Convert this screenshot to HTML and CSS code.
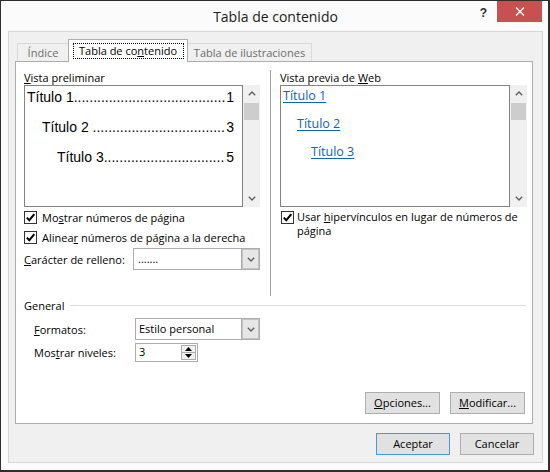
FILE: index.html
```html
<!DOCTYPE html>
<html lang="es">
<head>
<meta charset="utf-8">
<title>Tabla de contenido</title>
<link rel="stylesheet" href="styles.css">
</head>
<body>
<div class="window">
  <div class="titlebar">
    <div></div>
    <div class="title">Tabla de contenido</div>
    <div class="title-actions">
      <span class="help">?</span>
      <span class="close"><svg width="10" height="9" viewBox="0 0 10 9"><path d="M1 0.5 L9 8.5 M9 0.5 L1 8.5" stroke="#fff" stroke-width="1.4" fill="none"/></svg></span>
    </div>
  </div>
  <div class="client">
    <div class="tabs">
      <div class="tab tab-first">Índice</div>
      <div class="tab active"><span class="focus">Tabla de co<u>n</u>tenido</span></div>
      <div class="tab tab-last">Tabla de ilustraciones</div>
    </div>
    <div class="panel">
      <div class="columns">
        <div class="col col-left">
          <div class="label"><u>V</u>ista preliminar</div>
          <div class="preview">
            <div class="box print">
              <div class="toc-row lvl1"><span>Título 1.......................................</span><span class="num">1</span></div>
              <div class="toc-row lvl2"><span>Título 2 ..................................</span><span class="num">3</span></div>
              <div class="toc-row lvl3"><span>Título 3...............................</span><span class="num">5</span></div>
            </div>
            <div class="scroll">
              <div class="arrow"><svg width="8" height="5" viewBox="0 0 8 5"><path d="M0.8 4.2 L4 1 L7.2 4.2" stroke="#606060" stroke-width="1.4" fill="none"/></svg></div>
              <div class="thumb"></div>
              <div class="track"></div>
              <div class="arrow"><svg width="8" height="5" viewBox="0 0 8 5"><path d="M0.8 0.8 L4 4 L7.2 0.8" stroke="#606060" stroke-width="1.4" fill="none"/></svg></div>
            </div>
          </div>
          <div class="check">
            <span class="cbox"><svg width="11" height="11" viewBox="0 0 11 11"><path d="M1.8 5.6 L4.3 8.2 L9.3 2.2" stroke="#000" stroke-width="2" fill="none"/></svg></span>
            <span>Mo<u>s</u>trar números de página</span>
          </div>
          <div class="check">
            <span class="cbox"><svg width="11" height="11" viewBox="0 0 11 11"><path d="M1.8 5.6 L4.3 8.2 L9.3 2.2" stroke="#000" stroke-width="2" fill="none"/></svg></span>
            <span>Alinea<u>r</u> números de página a la derecha</span>
          </div>
          <div class="field-row fill-row">
            <span><u>C</u>arácter de relleno:</span>
            <div class="select fill-select">
              <span class="val">.......</span>
              <span class="btn"><svg width="8" height="5" viewBox="0 0 8 5"><path d="M0.8 0.8 L4 4 L7.2 0.8" stroke="#606060" stroke-width="1.4" fill="none"/></svg></span>
            </div>
          </div>
        </div>
        <div class="divider"></div>
        <div class="col col-right">
          <div class="label">Vista previa de <u>W</u>eb</div>
          <div class="preview">
            <div class="box web">
              <div class="web-row lvl1"><span class="link">Título 1</span></div>
              <div class="web-row lvl2"><span class="link">Título 2</span></div>
              <div class="web-row lvl3"><span class="link">Título 3</span></div>
            </div>
            <div class="scroll">
              <div class="arrow"><svg width="8" height="5" viewBox="0 0 8 5"><path d="M0.8 4.2 L4 1 L7.2 4.2" stroke="#606060" stroke-width="1.4" fill="none"/></svg></div>
              <div class="thumb"></div>
              <div class="track"></div>
              <div class="arrow"><svg width="8" height="5" viewBox="0 0 8 5"><path d="M0.8 0.8 L4 4 L7.2 0.8" stroke="#606060" stroke-width="1.4" fill="none"/></svg></div>
            </div>
          </div>
          <div class="check check-wrap">
            <span class="cbox"><svg width="11" height="11" viewBox="0 0 11 11"><path d="M1.8 5.6 L4.3 8.2 L9.3 2.2" stroke="#000" stroke-width="2" fill="none"/></svg></span>
            <span class="wrap-text">Usar <u>h</u>ipervínculos en lugar de números de<br>página</span>
          </div>
        </div>
      </div>
      <div class="general-head">
        <span>General</span>
        <span class="rule"></span>
      </div>
      <div class="field-row gen-row">
        <span class="gen-label"><u>F</u>ormatos:</span>
        <div class="select fmt-select">
          <span class="val">Estilo personal</span>
          <span class="btn"><svg width="8" height="5" viewBox="0 0 8 5"><path d="M0.8 0.8 L4 4 L7.2 0.8" stroke="#606060" stroke-width="1.4" fill="none"/></svg></span>
        </div>
      </div>
      <div class="field-row gen-row spin-row">
        <span class="gen-label">Mos<u>t</u>rar niveles:</span>
        <div class="spin">
          <span class="val">3</span>
          <span class="spin-btns">
            <span class="sb"><svg width="7" height="4" viewBox="0 0 7 4"><path d="M0 4 L3.5 0 L7 4 Z" fill="#000"/></svg></span>
            <span class="sb"><svg width="7" height="4" viewBox="0 0 7 4"><path d="M0 0 L3.5 4 L7 0 Z" fill="#000"/></svg></span>
          </span>
        </div>
      </div>
      <div class="panel-buttons">
        <div class="button wide"><u>O</u>pciones...</div>
        <div class="button wide"><u>M</u>odificar...</div>
      </div>
    </div>
    <div class="footer">
      <div class="button default">Aceptar</div>
      <div class="button">Cancelar</div>
    </div>
  </div>
</div>
</body>
</html>
```

FILE: styles.css
```css
* { box-sizing: border-box; }
html, body { margin: 0; padding: 0; }
body {
  width: 550px;
  height: 472px;
  font-family: "Open Sans", "Noto Sans", sans-serif;
  font-size: 11px;
  color: #000;
  background: #fbfbfb;
}
u { text-decoration: underline; text-underline-offset: 1px; }

.window {
  width: 550px;
  height: 472px;
  border: 1px solid #2e2e2e;
  border-right-width: 2px;
  border-bottom-width: 2px;
  background: #fbfbfb;
  padding: 0 5px 7px 7px;
  display: flex;
  flex-direction: column;
}

.titlebar {
  height: 30px;
  display: grid;
  grid-template-columns: 1fr auto 1fr;
}
.title {
  font-size: 14px;
  line-height: 18px;
  padding-top: 7px;
  color: #1a1a1a;
}
.title-actions {
  display: flex;
  justify-content: flex-end;
  align-items: flex-start;
}
.help {
  font-family: "Liberation Sans", Arial, sans-serif;
  font-weight: bold;
  font-size: 12px;
  line-height: 14px;
  margin-top: 5px;
  margin-right: 10px;
  color: #2b2b2b;
}
.close {
  width: 45px;
  height: 21px;
  margin-right: 1px;
  background: #c75050;
  display: flex;
  align-items: center;
  justify-content: center;
}

.client {
  flex: 1;
  border: 1px solid #d6d6d6;
  background: #f0f0f0;
  padding: 7px 8px 7px 6px;
  display: flex;
  flex-direction: column;
}

.tabs {
  display: flex;
  align-items: flex-end;
  height: 22px;
  padding-left: 2px;
  position: relative;
  z-index: 1;
}
.tab {
  height: 18px;
  border: 1px solid #d9d9d9;
  border-bottom: none;
  background: #f0f0f0;
  color: #6d6d6d;
  display: flex;
  align-items: center;
  justify-content: center;
  line-height: 14px;
}
.tab-first { width: 51px; border-right: none; }
.tab-last { width: 124px; border-left: none; }
.tab.active {
  width: 120px;
  height: 23px;
  margin-bottom: -1px;
  background: #fff;
  border-color: #adadad;
  color: #000;
  align-items: flex-start;
  padding-top: 3px;
}
.focus {
  width: 111px;
  height: 16px;
  border: 1px dotted #000;
  text-align: center;
  line-height: 14px;
}

.panel {
  height: 363px;
  margin-right: 1px;
  background: #fff;
  border: 1px solid #adadad;
  padding: 8px 5px 9px 8px;
  display: flex;
  flex-direction: column;
}

.columns {
  display: flex;
  height: 226px;
}
.col { display: flex; flex-direction: column; }
.col-left { width: 236px; }
.col-right { width: 247px; }
.divider {
  width: 1px;
  background: #a0a0a0;
  margin: 0 9px 0 10px;
}
.label {
  height: 15px;
  line-height: 15px;
}

.preview {
  display: flex;
  height: 122px;
}
.box {
  border: 1px solid #828282;
  background: #fff;
}
.col-left .box { width: 219px; }
.col-right .box { width: 230px; }
.scroll {
  width: 17px;
  background: #f0f0f0;
  display: flex;
  flex-direction: column;
}
.scroll .arrow {
  height: 17px;
  display: flex;
  align-items: center;
  justify-content: center;
}
.scroll .thumb {
  height: 17px;
  margin: 1px 1px 0 1px;
  background: #cdcdcd;
}
.scroll .track { flex: 1; }

.print {
  font-family: "Liberation Sans", Arial, sans-serif;
  font-size: 14px;
  padding: 3px 8px 0 2px;
  display: flex;
  flex-direction: column;
  gap: 14px;
}
.toc-row {
  display: flex;
  height: 16px;
  line-height: 16px;
  white-space: nowrap;
}
.toc-row .num { margin-left: auto; }
.print .lvl2 { padding-left: 15px; }
.print .lvl3 { padding-left: 30px; }

.web {
  font-size: 12.5px;
  padding: 2px 2px 0 2px;
  display: flex;
  flex-direction: column;
  gap: 12px;
}
.web-row { height: 16px; line-height: 16px; }
.web .lvl2 { padding-left: 14px; }
.web .lvl3 { padding-left: 28px; }
.link {
  color: #0a64c8;
  text-decoration: underline;
  text-underline-offset: 2px;
}

.check {
  display: flex;
  align-items: center;
  gap: 5px;
  height: 20px;
}
.cbox {
  width: 13px;
  height: 13px;
  border: 1px solid #333;
  background: #fff;
  display: flex;
  align-items: center;
  justify-content: center;
  flex: none;
}
.check-wrap {
  align-items: flex-start;
  height: auto;
  gap: 3px;
  padding-left: 1px;
}
.check-wrap .cbox { margin-top: 4px; }
.wrap-text {
  padding-top: 3px;
  line-height: 14px;
  white-space: nowrap;
}

.field-row {
  display: flex;
  align-items: center;
  height: 22px;
}
.fill-row { margin-top: 1px; }
.select {
  height: 22px;
  border: 1px solid #acacac;
  background: #fff;
  display: flex;
  align-items: stretch;
}
.select .val {
  flex: 1;
  padding-left: 4px;
  line-height: 19px;
}
.select .btn {
  width: 18px;
  background: #e6e6e6;
  border-left: 1px solid #acacac;
  box-shadow: inset 0 0 0 1px #c4c4c4;
  display: flex;
  align-items: center;
  justify-content: center;
}
.fill-select { width: 127px; margin-left: auto; }

.general-head {
  display: flex;
  align-items: center;
  height: 15px;
  margin-top: 2px;
}
.general-head .rule {
  flex: 1;
  height: 1px;
  background: #dcdcdc;
  margin: 0 1px 0 6px;
}
.gen-row { padding-left: 10px; margin-top: 5px; }
.gen-label { width: 101px; }
.fmt-select { width: 125px; }
.fmt-select .val { padding-left: 3px; }
.spin-row { margin-top: 3px; height: 19px; }
.spin {
  width: 63px;
  height: 19px;
  border: 1px solid #acacac;
  background: #fff;
  display: flex;
}
.spin .val {
  flex: 1;
  padding-left: 3px;
  line-height: 16px;
}
.spin-btns {
  width: 16px;
  display: flex;
  flex-direction: column;
  padding: 1px 1px 1px 0;
}
.sb {
  flex: 1;
  border: 1px solid #acacac;
  background: #f0f0f0;
  display: flex;
  align-items: center;
  justify-content: center;
}
.sb + .sb { border-top: none; }

.panel-buttons {
  margin-top: auto;
  display: flex;
  justify-content: flex-end;
  gap: 10px;
  padding-right: 2px;
}
.button {
  width: 74px;
  height: 22px;
  border: 1px solid #adadad;
  background: #e1e1e1;
  display: flex;
  align-items: center;
  justify-content: center;
  line-height: 14px;
}
.button.wide { width: 75px; }
.button.default { border-color: #3c9be8; }

.footer {
  margin-top: 9px;
  display: flex;
  justify-content: flex-end;
  gap: 10px;
}
```
